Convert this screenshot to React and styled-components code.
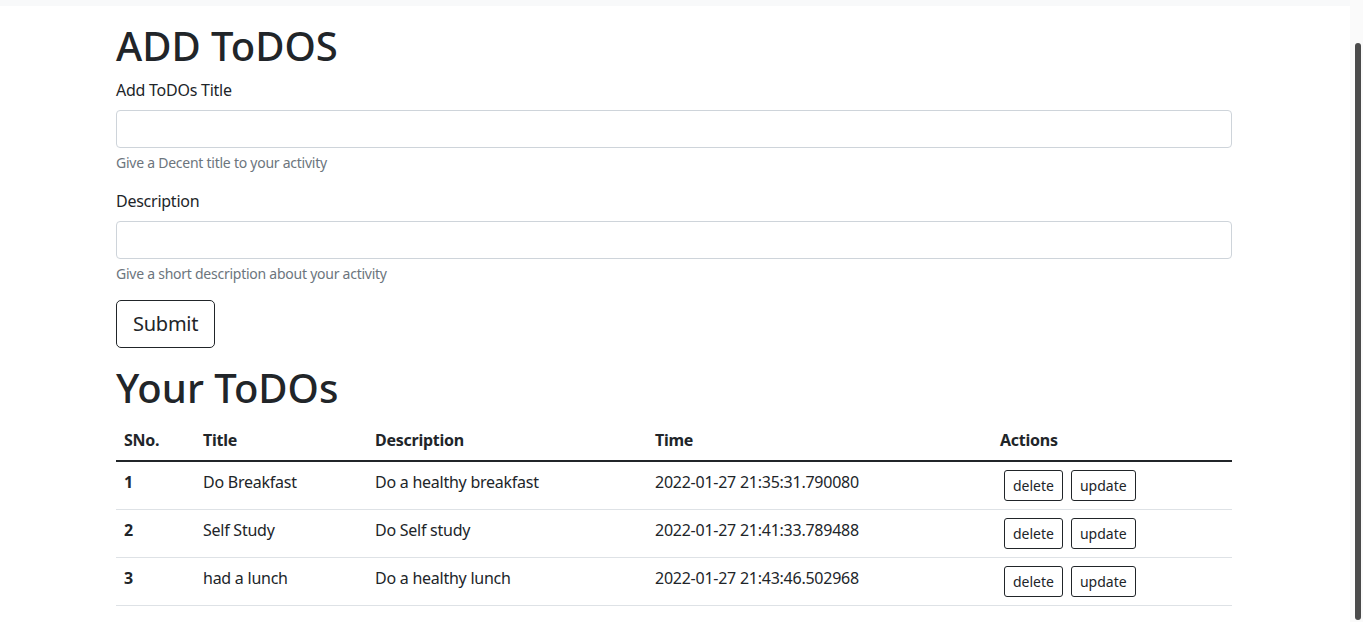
import React from 'react';
import styled, { createGlobalStyle } from 'styled-components';

const GlobalStyle = createGlobalStyle`
  html, body {
    margin: 0;
    padding: 0;
    background: #fff;
  }
  body {
    font-family: "Noto Sans", "Open Sans", sans-serif;
    font-size: 16px;
    line-height: 1.5;
    letter-spacing: -0.25px;
    color: #212529;
  }
  * { box-sizing: border-box; }
`;

const Shell = styled.div`
  display: flex;
  height: 622px;
  overflow: hidden;
`;

const Main = styled.div`
  flex: 1;
  min-width: 0;
`;

const NavStrip = styled.div`
  height: 6px;
  background: #f8f9fa;
`;

const Container = styled.div`
  max-width: 1140px;
  margin: 16px auto 0;
  padding: 0 13px 0 11px;
`;

const Heading = styled.h1`
  margin: 0 0 8px;
  font-size: 40px;
  font-weight: 500;
  line-height: 1.2;
  letter-spacing: 0;
`;

const Form = styled.form`
  margin-bottom: 16px;
`;

const Field = styled.div`
  margin-bottom: 16px;
`;

const Label = styled.label`
  display: block;
  margin-bottom: 8px;
`;

const Input = styled.input`
  display: block;
  width: 100%;
  height: 38px;
  padding: 6px 12px;
  font: inherit;
  color: #212529;
  border: 1px solid #ced4da;
  border-radius: 4px;
  background: #fff;
`;

const Hint = styled.div`
  margin-top: 4px;
  font-size: 14px;
  color: #6c757d;
`;

const Button = styled.button`
  font-family: inherit;
  color: #212529;
  background: transparent;
  border: 1px solid #212529;
  cursor: pointer;
  line-height: 1.5;
  font-size: ${p => (p.$size === 'lg' ? '20px' : '14px')};
  letter-spacing: ${p => (p.$size === 'lg' ? '-0.25px' : '0')};
  padding: ${p => (p.$size === 'lg' ? '8px 16px' : '4px 8px')};
  border-radius: ${p => (p.$size === 'lg' ? '5px' : '3px')};
`;

const Table = styled.table`
  width: 100%;
  border-collapse: collapse;
  table-layout: fixed;
`;

const HeadCell = styled.th`
  padding: 8px;
  text-align: left;
  font-weight: 700;
  border-bottom: 2px solid #212529;
`;

const Cell = styled.td`
  padding: 8px;
  vertical-align: top;
  border-bottom: 1px solid #dee2e6;
  font-weight: ${p => (p.$bold ? 700 : 400)};
`;

const Actions = styled.div`
  display: flex;
  gap: 8px;
  padding-left: 4px;
`;

const ScrollTrack = styled.div`
  width: 13px;
  flex-shrink: 0;
  background: #fafafa;
  padding: 43px 3px 2px 5px;
`;

const ScrollThumb = styled.div`
  width: 6px;
  height: 100%;
  border-radius: 3px;
  background: #4b4b4b;
`;

const todos = [
  { sno: 1, title: 'Do Breakfast', desc: 'Do a healthy breakfast', time: '2022-01-27 21:35:31.790080' },
  { sno: 2, title: 'Self Study', desc: 'Do Self study', time: '2022-01-27 21:41:33.789488' },
  { sno: 3, title: 'had a lunch', desc: 'Do a healthy lunch', time: '2022-01-27 21:43:46.502968' },
];

const App = () => {
  return (
    <Shell>
      <GlobalStyle />
      <Main>
        <NavStrip />
        <Container>
          <Heading>ADD ToDOS</Heading>
          <Form onSubmit={e => e.preventDefault()}>
            <Field>
              <Label htmlFor="title">Add ToDOs Title</Label>
              <Input id="title" type="text" />
              <Hint>Give a Decent title to your activity</Hint>
            </Field>
            <Field>
              <Label htmlFor="desc">Description</Label>
              <Input id="desc" type="text" />
              <Hint>Give a short description about your activity</Hint>
            </Field>
            <Button $size="lg" type="submit">Submit</Button>
          </Form>

          <Heading>Your ToDOs</Heading>
          <Table>
            <colgroup>
              <col style={{ width: 79 }} />
              <col style={{ width: 172 }} />
              <col style={{ width: 280 }} />
              <col style={{ width: 345 }} />
              <col />
            </colgroup>
            <thead>
              <tr>
                <HeadCell>SNo.</HeadCell>
                <HeadCell>Title</HeadCell>
                <HeadCell>Description</HeadCell>
                <HeadCell>Time</HeadCell>
                <HeadCell>Actions</HeadCell>
              </tr>
            </thead>
            <tbody>
              {todos.map(todo => (
                <tr key={todo.sno}>
                  <Cell $bold>{todo.sno}</Cell>
                  <Cell>{todo.title}</Cell>
                  <Cell>{todo.desc}</Cell>
                  <Cell>{todo.time}</Cell>
                  <Cell>
                    <Actions>
                      <Button type="button">delete</Button>
                      <Button type="button">update</Button>
                    </Actions>
                  </Cell>
                </tr>
              ))}
            </tbody>
          </Table>
        </Container>
      </Main>
      <ScrollTrack>
        <ScrollThumb />
      </ScrollTrack>
    </Shell>
  );
};

export default App;
